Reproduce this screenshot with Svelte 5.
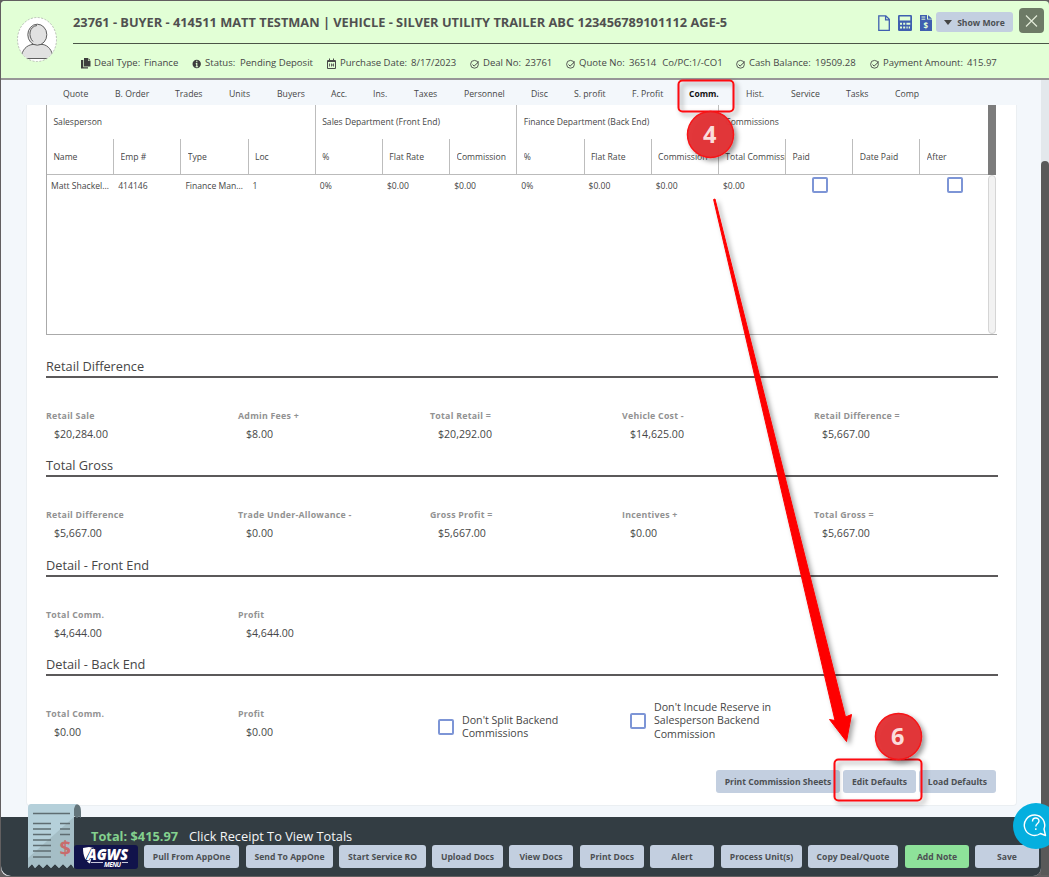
<script>
  const facts = [
    { icon: 'copy', label: 'Deal Type:', value: 'Finance', w: 111, lw: 50 },
    { icon: 'info', label: 'Status:', value: 'Pending Deposit', w: 135, lw: 35 },
    { icon: 'cal', label: 'Purchase Date:', value: '8/17/2023', w: 143, lw: 71 },
    { icon: 'check', label: 'Deal No:', value: '23761', w: 96, lw: 42 },
    { icon: 'check', label: 'Quote No:', value: '36514', extra: 'Co/PC:1/-CO1', w: 170, lw: 50 },
    { icon: 'check', label: 'Cash Balance:', value: '19509.28', w: 134, lw: 66 },
    { icon: 'check', label: 'Payment Amount:', value: '415.97', w: 140, lw: 84 }
  ];
  const tabs = [
    ['Quote', 52], ['B. Order', 60], ['Trades', 54], ['Units', 48], ['Buyers', 54], ['Acc.', 42],
    ['Ins.', 41], ['Taxes', 50], ['Personnel', 67], ['Disc', 43], ['S. profit', 58], ['F. Profit', 57],
    ['Comm.', 57], ['Hist.', 45], ['Service', 55], ['Tasks', 49], ['Comp', 50]
  ];
  const groups = [
    ['Salesperson', 4], ['Sales Department (Front End)', 3],
    ['Finance Department (Back End)', 3], ['Commissions', 4]
  ];
  const cols = ['Name', 'Emp #', 'Type', 'Loc', '%', 'Flat Rate', 'Commission', '%', 'Flat Rate', 'Commission', 'Total Commission', 'Paid', 'Date Paid', 'After'];
  const row = ['Matt Shackelford', '414146', 'Finance Manager', '1', '0%', '$0.00', '$0.00', '0%', '$0.00', '$0.00', '$0.00', true, '', true];
  const sections = [
    { title: 'Retail Difference', items: [['Retail Sale', '$20,284.00'], ['Admin Fees +', '$8.00'], ['Total Retail =', '$20,292.00'], ['Vehicle Cost -', '$14,625.00'], ['Retail Difference =', '$5,667.00']] },
    { title: 'Total Gross', items: [['Retail Difference', '$5,667.00'], ['Trade Under-Allowance -', '$0.00'], ['Gross Profit =', '$5,667.00'], ['Incentives +', '$0.00'], ['Total Gross =', '$5,667.00']] },
    { title: 'Detail - Front End', items: [['Total Comm.', '$4,644.00'], ['Profit', '$4,644.00']] },
    { title: 'Detail - Back End', items: [['Total Comm.', '$0.00'], ['Profit', '$0.00']], checks: true }
  ];
  const actions = [
    ['Pull From AppOne', 95, 7], ['Send To AppOne', 87, 6], ['Start Service RO', 87, 6], ['Upload Docs', 71, 6],
    ['View Docs', 64, 7], ['Print Docs', 64, 6], ['Alert', 64, 7], ['Process Unit(s)', 81, 6],
    ['Copy Deal/Quote', 90, 7], ['Add Note', 64, 6], ['Save', 64, 0]
  ];
</script>

<div class="screen">
  <div class="modal">
    <header>
      <svg class="avatar" viewBox="0 0 40 46" width="40" height="46">
        <clipPath id="av"><ellipse cx="20" cy="22.5" rx="19.5" ry="22" /></clipPath>
        <ellipse cx="20" cy="22.5" rx="19.5" ry="22" fill="#fff" stroke="#a5a5a5" stroke-width=".7" stroke-dasharray="2 1.5" />
        <g clip-path="url(#av)" fill="#e1e1e1" stroke="#5f5f5f" stroke-width="1">
          <path d="M4 41.500C5 32 10 28.500 15 27.500h11C31 28.500 35.500 33 36 41.500z" />
          <ellipse cx="20.300" cy="17.700" rx="9.500" ry="10.500" />
          <path d="M20 8.500c-8 1-9 11-4 16" fill="none" stroke-width="1" />
        </g>
      </svg>
      <div class="headmain">
        <div class="titlebar">
          <h1>23761 - BUYER - 414511 MATT TESTMAN | VEHICLE - SILVER UTILITY TRAILER ABC 123456789101112 AGE-5</h1>
          <div class="tools">
            <svg width="12" height="16" viewBox="0 0 12 16" fill="none" stroke="#3f5fb0" stroke-width="1.300"><path d="M.8.8h7l3.500 3.500v11H.8zM7.600.8v4h3.700" /></svg>
            <svg width="14" height="16" viewBox="0 0 14 16"><rect width="14" height="16" rx="1.300" fill="#3f5fb0" /><path fill="#e2ffd6" d="M1.700 1.600h10.600v4H1.700zM2 7.800h2v2H2zM5.200 7.800h2v2h-2zM8.400 7.800h3.900v2H8.400zM2 11.500h2v2H2zM5.200 11.500h2v2h-2zM8.400 11.500h1.300v2H8.400zM10.700 11.500H12v2h-1.300z" /></svg>
            <svg width="12" height="16" viewBox="0 0 12 16"><path fill="#3f5fb0" d="M0 0h7v4.500h5V16H0zM8 0l4 3.700H8z" /><path d="M1.500 2h3.800M1.500 4.200h3.800" stroke="#e2ffd6" /><text x="3.600" y="13.500" font-size="8" font-weight="700" fill="#e2ffd6">$</text></svg>
            <button class="more"><svg width="8" height="5"><path d="M0 0h8L4 5z" fill="#454545" /></svg>Show More</button>
            <button class="close" aria-label="Close"><svg width="25" height="25"><path d="M7 7.500l11 11M18 7.500l-11 11" stroke="#e2ead9" stroke-width="1.200" /></svg></button>
          </div>
        </div>
        <div class="facts">
          {#each facts as f}
            <div class="fact" style:width="{f.w}px">
              <svg width="10" height="11" viewBox="0 0 10 11">
                {#if f.icon === 'copy'}
                  <path fill="#3d3d3d" d="M3 0h4v3h2.500v5.500H3zM7.500 0L9.500 2.500h-2zM0 2h2.300v7.300H7V10.500H0z" />
                {:else if f.icon === 'info'}
                  <circle cx="4.700" cy="6" r="4.200" fill="#3d3d3d" /><path d="M4.800 2.800v1.500M3.800 5.600h1v3M3.600 8.700h2.500" stroke="#e2ffd6" stroke-width="1.100" fill="none" />
                {:else if f.icon === 'cal'}
                  <path d="M.5 2.500h8v8h-8zM2.500.5v2M6.500.5v2M.5 3.500h8" stroke="#4a4a4a" fill="none" /><path d="M2.500 5.500v3M4.500 5.500v3M6.500 5.500v3M4.500 7h2" stroke="#555" stroke-width=".9" />
                {:else}
                  <circle cx="4.500" cy="6.300" r="3.900" fill="none" stroke="#4a4a4a" stroke-width=".9" /><path d="M2.500 6.500l1.600 1.600L9 3.500" fill="none" stroke="#4a4a4a" />
                {/if}
              </svg>
              <span style:width="{f.lw}px">{f.label}</span><span>{f.value}</span>
              {#if f.extra}<span class="extra">{f.extra}</span>{/if}
            </div>
          {/each}
        </div>
      </div>
    </header>

    <nav>
      {#each tabs as [t, w]}
        <a class:active={t === 'Comm.'} style:width="{w}px">{t}</a>
      {/each}
    </nav>

    <main>
      <div class="grid">
        <div class="gridhead">
          <div class="groups">
            {#each groups as [g, n]}<div style:grid-column="span {n}">{g}</div>{/each}
          </div>
          <div class="cols">
            {#each cols as c}<div><span>{c}</span></div>{/each}
          </div>
        </div>
        <div class="headbar"></div>
        <div class="row">
          {#each row as c}
            <div>{#if c === true}<i class="box"></i>{:else}{c}{/if}</div>
          {/each}
        </div>
        <div class="track"></div>
      </div>

      {#each sections as s}
        <section>
          <h2>{s.title}</h2>
          <div class="values">
            {#each s.items as [l, v]}
              <div class="value"><label>{l}</label><span>{v}</span></div>
            {/each}
            {#if s.checks}
              <div class="check one"><i class="box"></i><span>Don't Split Backend<br />Commissions</span></div>
              <div class="check two"><i class="box"></i><span>Don't Incude Reserve in<br />Salesperson Backend<br />Commission</span></div>
            {/if}
          </div>
        </section>
      {/each}

      <div class="defaults">
        <button style="width:124px">Print Commission Sheets</button>
        <button style="width:73px">Edit Defaults</button>
        <button style="width:77px">Load Defaults</button>
      </div>
    </main>

    <footer>
      <svg class="receipt" width="54" height="65" viewBox="0 0 54 65">
        <path d="M47 0c5 0 6 3 6 8v6l-2-1.500-2 1.500-3-2V4z" fill="#63747a" />
        <path d="M3 0h46c-2 1-3 3-3 6v58l-3-4-4 4-4-4-4 4-4-4-4 4-4-4-4 4-4-4-4 4-3-4-4 4V4c0-3 1-4 3-4z" fill="#b5d0da" />
        <path d="M46 13v51l-3-4-4 4-4-4-4 4-4-4-4 4-4-4-4 4-4-4-4 4-3-4-4 4V54z" fill="#a5bec6" />
        <path d="M5 9.500h37M5 19.500h18M32 19.500h10M5 25h18M32 25h10M5 30.500h18M32 30.500h10M5 36h18M5 41.500h18M5 47h18M5 53h18" stroke="#5f6d72" stroke-width="1.500" />
        <text x="31.500" y="51" font-size="20" font-weight="700" fill="#c96b6c">$</text>
      </svg>
      <div class="total"><b>Total: $415.97</b><span>Click Receipt To View Totals</span></div>
      <div class="actions">
        <div class="logo">
          <svg width="64" height="24" viewBox="0 0 64 24">
            <path d="M9 3l6-1 5 1-4 15.500C12 16.500 9 12 9 3z" fill="#fff" />
            <path d="M11.500 17L19 3.500" stroke="#11134b" stroke-width="2.200" />
            <path d="M17 17.500h12M48 17.500h6" stroke="#c9c9db" />
            <text x="13" y="14.600" font-size="15.500" font-weight="800" font-style="italic" fill="#fff" stroke="#11134b" stroke-width="1.200" paint-order="stroke" textLength="41" lengthAdjust="spacingAndGlyphs">AGWS</text>
            <text x="30" y="21.500" font-size="6.500" font-weight="700" font-style="italic" fill="#fff" textLength="17">MENU</text>
          </svg>
        </div>
        {#each actions as [t, w, m]}
          <button class:green={t === 'Add Note'} style:width="{w}px" style:margin-right="{m}px">{t}</button>
        {/each}
      </div>
    </footer>
  </div>
  <div class="scroll"><div></div></div>

  <svg class="marks" width="1049" height="877">
    <defs>
      <filter id="sh" x="-30%" y="-30%" width="170%" height="170%"><feDropShadow dx="3" dy="3" stdDeviation="2.500" flood-color="#000" flood-opacity=".4" /></filter>
      <filter id="ash" filterUnits="userSpaceOnUse" x="690" y="180" width="200" height="590"><feDropShadow dx="3" dy="3" stdDeviation="2.500" flood-color="#000" flood-opacity=".35" /></filter>
    </defs>
    <g filter="url(#sh)"><rect x="678.500" y="80.500" width="55" height="31" rx="4" fill="none" stroke="#fc0c10" stroke-width="2" /></g>
    <g filter="url(#sh)"><rect x="834.500" y="759.500" width="87" height="41" rx="4" fill="none" stroke="#fc0c10" stroke-width="2" /></g>
    <path filter="url(#ash)" d="M713.600 199.500L715 199L845.500 717L851.500 714.500L846.500 741.500L829.500 719.500L835 720.500z" fill="#fe0000" stroke="#fe0000" stroke-linejoin="round" />
    {#each [[710.500, 134.500, '4'], [898.500, 736.500, '6']] as [x, y, n]}
      <g filter="url(#sh)"><circle cx={x} cy={y} r="23" fill="#e23437" fill-opacity=".97" stroke="#f71318" stroke-width="1.500" /></g>
      <text x={x - .7} y={y + 8} text-anchor="middle" font-size="23.500" font-weight="700" fill="#fbdcdc">{n}</text>
    {/each}
  </svg>

  <div class="help">
    <svg width="26" height="26" viewBox="0 0 26 26" fill="none" stroke="#fff" stroke-width="1.400"><path d="M17.500 21.500A10.200 10.200 0 1 1 21 17L22.500 23.500z" stroke-linejoin="round" /><path d="M9.500 9.500c0-4.500 6.500-4.500 6.500-.5 0 2.500-3.200 2.500-3.200 5.500M12.800 16.300v1.600" /></svg>
  </div>
</div>

<style>
  :global(body) { margin: 0; background: #625f60; }
  .screen { position: relative; width: 1049px; height: 877px; overflow: hidden; font-family: "Open Sans", "Noto Sans", sans-serif; color: #464646; background: #625f60; display: flex; }
  .screen * { box-sizing: border-box; }
  button { border: 0; padding: 1px 0 0; margin: 0; font: 700 8.600px/22px "Open Sans", sans-serif; color: #4c4f53; background: #c3cfe0; border-radius: 3px; height: 23px; white-space: nowrap; overflow: hidden; }
  .modal { margin: 1px 0 1px 1px; width: 1040px; height: 875px; display: flex; flex-direction: column; background: #f3f7fb; border-radius: 4px 0 8px 8px; }
  header { height: 79px; flex: none; width: 1048px; display: flex; background: #e2ffd6; border-bottom: 2px solid #979797; border-radius: 4px 4px 0 0; }
  .avatar { margin: 16px 0 0 16px; flex: none; }
  .headmain { margin-left: 16px; width: 976px; }
  .titlebar { height: 43px; border-bottom: 1px solid #4b5547; display: flex; justify-content: space-between; }
  h1 { margin: 11px 0 0; font-size: 12.800px; line-height: 20px; font-weight: 700; white-space: nowrap; width: 660px; color: #505050; }
  .tools { display: flex; gap: 8px; align-items: flex-start; padding-top: 14px; margin-right: 5px; width: 166px; flex: none; }
  .tools svg { flex: none; }
  .more { width: 77px; height: 20px; margin: -3px 0 0 -4px; line-height: 20px; display: flex; align-items: center; justify-content: center; gap: 5px; flex: none; }
  .close { width: 25px; height: 25px; margin: -7px 0 0 -2px; padding: 0; background: #6d7a66; flex: none; border-radius: 4px; }
  .close svg { display: block; }
  .facts { display: flex; padding-left: 8px; margin-top: 12px; font-size: 9.550px; line-height: 14px; white-space: nowrap; }
  .fact { display: flex; flex: none; }
  .fact svg { margin: 2px 3px 0 0; flex: none; }
  .fact span { flex: none; }
  .fact .extra { margin-left: 6px; }
  nav { height: 25px; flex: none; display: flex; padding-left: 62px; font-size: 8.700px; line-height: 28px; white-space: nowrap; }
  nav a { flex: none; }
  nav .active { color: #111; font-weight: 700; font-size: 8.500px; }
  main { width: 991px; height: 701px; flex: none; margin-left: 25px; background: #fff; border: 1px solid #ebeff2; border-top: 0; border-radius: 0 0 4px 4px; padding-left: 19px; }
  .grid { width: 951px; height: 230px; border-left: 1px solid #aaa; border-bottom: 1px solid #aaa; display: grid; grid-template-columns: 941px 8px; grid-template-rows: 70px 159px; font-size: 8.600px; white-space: nowrap; }
  .gridhead { border-bottom: 1px solid #bbb; }
  .groups, .cols, .row { display: grid; grid-template-columns: repeat(14, 67.200px); }
  .groups > div { height: 34px; line-height: 34px; padding-left: 6.400px; border-right: 1px solid #bdbdbd; }
  .cols > div { height: 35px; line-height: 36px; padding-left: 6.400px; border-right: 1px solid #bdbdbd; }
  .groups > div:last-child, .cols > div:last-child { border-right: 0; }
  .cols span { display: block; overflow: hidden; }
  .row > div { line-height: 23px; padding: 0 4px; overflow: hidden; text-overflow: ellipsis; height: 24px; }
  .row .box { margin: 2px auto 0; position: relative; left: .6px; }
  .headbar { background: #7c7c7c; }
  .track { background: #f2f2f2; border: 1px solid #d5d5d5; border-radius: 4px; }
  .box { display: block; width: 16px; height: 16px; flex: none; border: 2px solid #7d95d6; border-radius: 2px; background: #fff; }
  section { height: 99.330px; width: 952px; }
  .grid + section { margin-top: 20px; }
  h2 { margin: 0; height: 23px; border-bottom: 2px solid #5b595a; font-size: 12.750px; line-height: 22.500px; font-weight: 400; }
  .values { display: flex; padding-top: 31px; }
  .value { width: 192px; flex: none; display: flex; flex-direction: column; }
  label { font-size: 8.800px; letter-spacing: .25px; line-height: 14px; font-weight: 700; color: #929292; white-space: nowrap; }
  .value span { font-size: 10.600px; line-height: 16px; margin: 3px 0 0 8px; }
  .check { display: flex; width: 192px; padding-left: 8px; font-size: 10.650px; line-height: 13.500px; gap: 8px; white-space: nowrap; }
  .one { margin-top: 7px; }
  .two { margin-top: -6px; }
  .one .box { margin-top: 5px; }
  .two .box { margin-top: 12px; }
  .defaults { display: flex; justify-content: flex-end; gap: 3px; width: 950px; margin-top: 18px; }
  footer { flex: none; width: 1040px; height: 59px; margin-top: 11px; background: #333d43; border-radius: 0 0 8px 10px; position: relative; }
  .receipt { position: absolute; left: 27px; top: -13px; }
  .total { padding-left: 90px; padding-top: 9px; height: 28px; line-height: 20px; font-size: 12.800px; color: #f4f5f6; white-space: nowrap; }
  .total b { color: #83d18e; margin-right: 11px; }
  .actions { display: flex; padding-left: 73px; }
  .logo { width: 64px; height: 24px; margin-right: 6px; background: #11134b; border-radius: 3px; flex: none; }
  .actions button { flex: none; }
  .actions .green { background: #8ee29a; }
  .scroll { width: 8px; height: 795px; margin-top: 80px; background: #e3e8ec; }
  .scroll div { margin-top: 81px; height: 714px; background: #595959; border-radius: 4px 4px 0 0; }
  .marks { position: absolute; left: 0; top: 0; }
  .help { position: absolute; left: 1013px; top: 803px; width: 46px; height: 46px; border-radius: 50%; background: #04afdf; }
  .help svg { margin: 9px 0 0 10px; }
</style>
